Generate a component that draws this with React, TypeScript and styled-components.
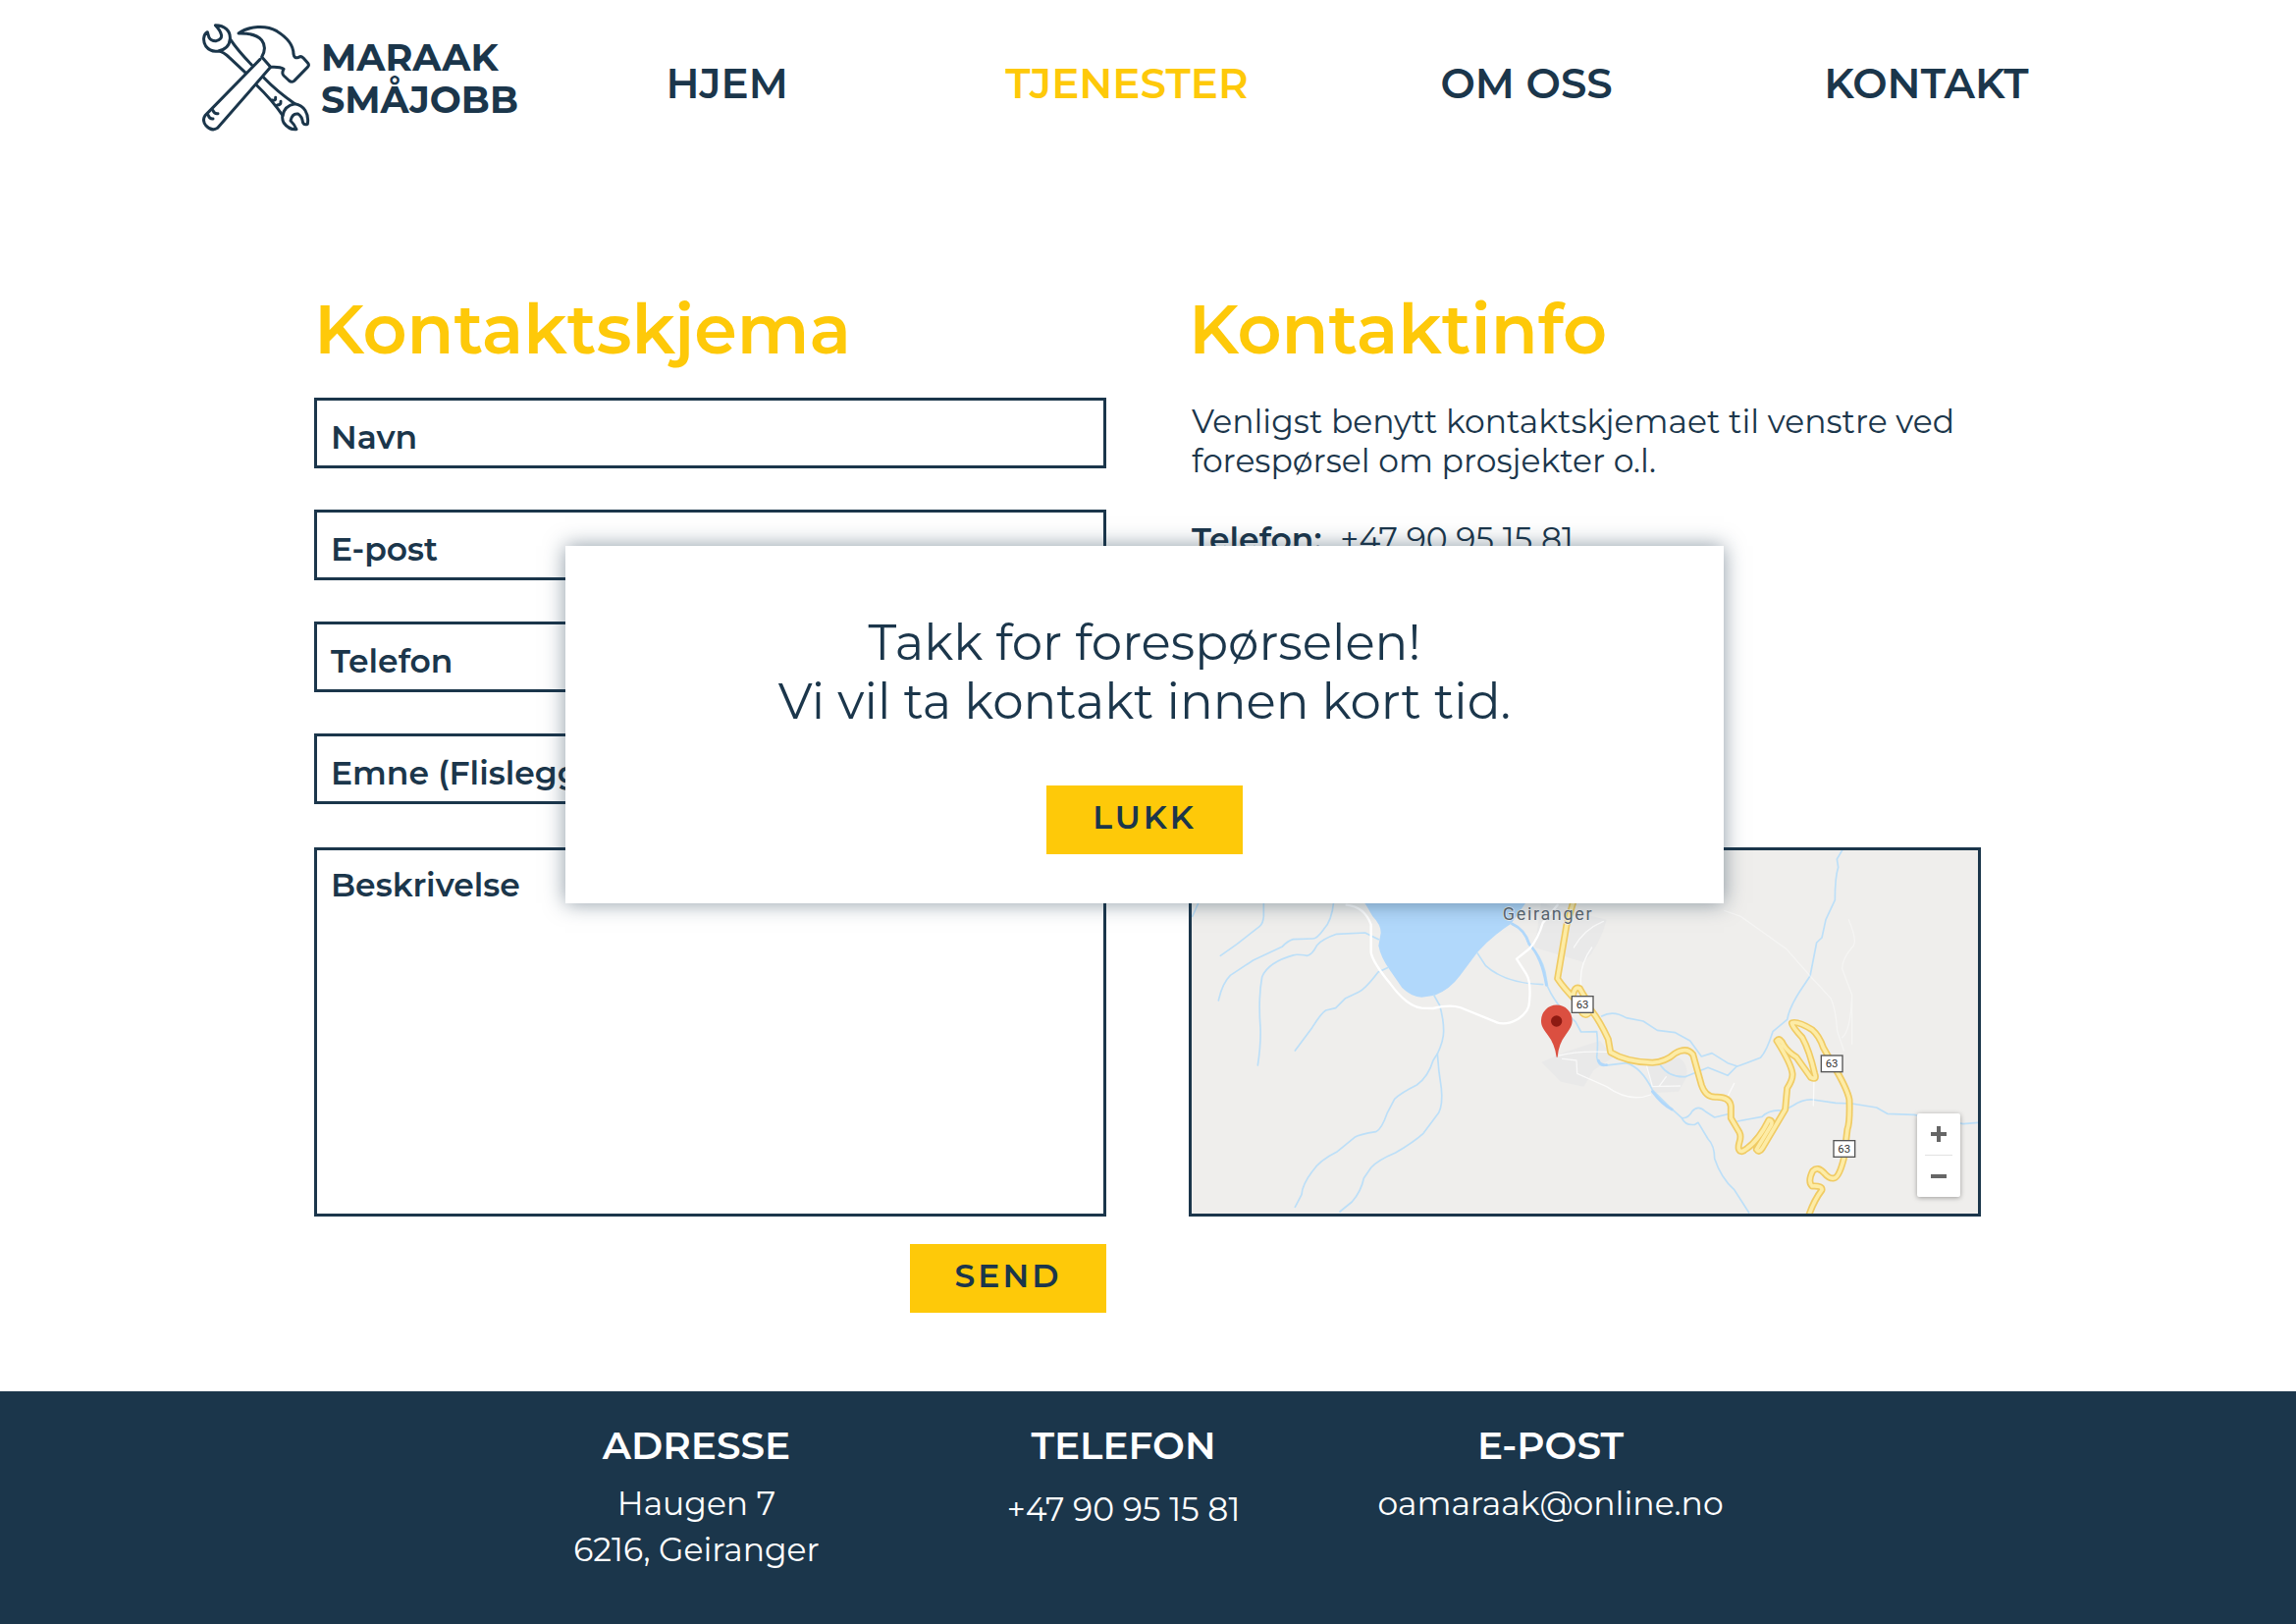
import React, { useState } from "react";
import styled, { createGlobalStyle } from "styled-components";

const navy = "#1b364b";
const yellow = "#fec909";
const fontStack = `Montserrat, Inter, "Noto Sans", sans-serif`;

const GlobalStyle = createGlobalStyle`
  *, *::before, *::after { box-sizing: border-box; }
  body {
    margin: 0;
    background: #fff;
    color: ${navy};
    font-family: ${fontStack};
  }
`;

const Page = styled.div`
  position: relative;
  display: flex;
  flex-direction: column;
  min-height: 100vh;
`;

const Header = styled.header`
  display: grid;
  grid-template-columns: 331px 1fr;
  align-items: center;
  padding: 24px 173px 24px 206px;
`;

const Logo = styled.a`
  display: flex;
  align-items: center;
  gap: 11px;
  color: ${navy};
  font-size: 38px;
  line-height: 43px;
  font-weight: 700;
  text-decoration: none;

  svg {
    flex: none;
    width: 110px;
    height: 110px;
  }

  span {
    padding-top: 2px;
  }
`;

const Nav = styled.nav`
  display: grid;
  grid-template-columns: repeat(4, 1fr);
  padding-top: 12px;
`;

const NavLink = styled.a<{ $active?: boolean }>`
  color: ${(p) => (p.$active ? yellow : navy)};
  font-size: 42px;
  line-height: 50px;
  font-weight: 600;
  text-align: center;
  text-decoration: none;
`;

const Main = styled.main`
  display: grid;
  grid-template-columns: 1fr 1fr;
  gap: 84px;
  padding: 132px 321px 80px 320px;
`;

const Column = styled.section`
  display: flex;
  flex-direction: column;
  min-width: 0;
`;

const Heading = styled.h2`
  margin: 0 0 25px;
  color: ${yellow};
  font-size: 70px;
  line-height: 90px;
  font-weight: 600;
`;

const Form = styled.form`
  display: flex;
  flex-direction: column;
`;

const Fields = styled.div`
  display: flex;
  flex-direction: column;
  gap: 42px;
  margin-bottom: 44px;
`;

const Field = styled.label<{ $tall?: boolean }>`
  display: flex;
  align-items: ${(p) => (p.$tall ? "flex-start" : "center")};
  gap: 16px;
  height: ${(p) => (p.$tall ? "376px" : "72px")};
  padding: ${(p) => (p.$tall ? "15px 14px" : "8px 14px 0")};
  border: 3px solid ${navy};
  font-size: 33px;
  line-height: 40px;
  font-weight: 600;
  white-space: nowrap;
`;

const Input = styled.input`
  flex: 1;
  min-width: 0;
  padding: 0;
  border: 0;
  outline: 0;
  background: transparent;
  color: inherit;
  font: inherit;
  font-weight: 400;
`;

const TextArea = styled(Input).attrs({ as: "textarea" })`
  align-self: stretch;
  resize: none;
`;

const Button = styled.button`
  width: 200px;
  height: 70px;
  padding: 0 0 7px;
  border: 0;
  background: ${yellow};
  color: ${navy};
  font-family: inherit;
  font-size: 33px;
  line-height: 40px;
  font-weight: 600;
  letter-spacing: 3px;
  cursor: pointer;
`;

const SendButton = styled(Button)`
  align-self: flex-end;
  margin-top: 28px;
`;

const Info = styled.div`
  flex: 1;
  padding: 4px 0 0 3px;
  font-size: 33px;
  line-height: 40px;

  p {
    margin: 0 0 40px;
  }

  b {
    margin-right: 10px;
    font-weight: 600;
  }
`;

const MapFrame = styled.div`
  position: relative;
  height: 376px;
  margin-bottom: 98px;
  border: 3px solid ${navy};
  background: #efeeec;

  > svg {
    display: block;
    width: 100%;
    height: 100%;
  }
`;

const ZoomControl = styled.div`
  position: absolute;
  right: 18px;
  bottom: 17px;
  display: flex;
  flex-direction: column;
  align-items: center;
  width: 44px;
  background: #fff;
  border-radius: 2px;
  box-shadow: 0 1px 5px rgba(0, 0, 0, 0.35);
`;

const ZoomButton = styled.button`
  display: flex;
  align-items: center;
  justify-content: center;
  width: 44px;
  height: 42px;
  padding: 0;
  border: 0;
  background: transparent;
  cursor: pointer;
`;

const ZoomDivider = styled.div`
  width: 28px;
  height: 1px;
  background: #e2e2e2;
`;

const Footer = styled.footer`
  flex: 1;
  display: grid;
  grid-template-columns: repeat(3, 1fr);
  padding: 31px 542px 54px 492px;
  background: ${navy};
  color: #fff;
  text-align: center;
`;

const FooterColumn = styled.div<{ $gap?: number }>`
  display: flex;
  flex-direction: column;
  gap: ${(p) => p.$gap ?? 12}px;
  font-size: 33px;
  line-height: 47px;

  h3 {
    margin: 0;
    font-size: 39px;
    line-height: 48px;
    font-weight: 600;
  }

  address,
  a {
    color: inherit;
    font-style: normal;
    text-decoration: none;
  }
`;

const Overlay = styled.div`
  position: absolute;
  inset: 0;
  display: flex;
  align-items: flex-start;
  justify-content: center;
  padding: 556px 7px 0 0;
`;

const Dialog = styled.div`
  display: flex;
  flex-direction: column;
  align-items: center;
  gap: 55px;
  width: 1180px;
  padding: 69px 40px 50px;
  background: #fff;
  box-shadow: 0 0 20px rgba(27, 54, 75, 0.5);
  font-size: 50px;
  line-height: 60px;
  text-align: center;

  p {
    margin: 0;
  }
`;

const ToolsIcon = () => (
  <svg
    viewBox="47 41 330 330"
    fill="none"
    stroke={navy}
    strokeWidth="9"
    strokeLinecap="round"
    strokeLinejoin="round"
    aria-hidden="true"
  >
    <path d="M198 167 Q156 124 132 88 C134 64 116 46 87 46 Q103 62 106 78 Q106 90 90 94 Q74 95 68 84 L63 67 C49 74 49 96 58 110 C68 123 84 127 96 125 Q112 127 130 145 L178 190 M132 88 Q130 118 96 125" />
    <path d="M158 71 C190 47 244 46 275 64 C304 82 326 107 326 134 Q328 148 340 145 Q348 138 356 146 L370 162 Q375 168 369 174 L328 216 Q320 222 312 215 L296 200 Q289 193 296 180 Q284 172 256 174 L229 143 C240 124 241 108 229 92 C215 75 190 70 158 71 Z" />
    <path d="M224 150 L56 322 Q46 337 58 352 Q76 372 94 360 L256 174" />
    <path d="M80 307 Q85 318 95 316 M66 322 Q70 333 80 332" />
    <path d="M235 206 Q275 248 330 286 C358 290 374 316 369 348 Q359 352 355 344 Q352 324 340 317 Q322 314 317 338 Q330 350 335 364 Q312 366 296 344 Q290 330 293 322 Q260 274 214 230" />
    <path d="M330 286 Q298 292 293 322 M261 275 Q272 278 271 267 M276 290 Q288 290 287 279" />
  </svg>
);

const roadPath =
  "M1210 200 L1188 275 L1160 440 Q1180 470 1215 505 M1208 490 Q1212 462 1228 470 Q1236 485 1246 500 M1236 545 Q1250 560 1262 535 Q1290 570 1315 625 L1322 665 Q1370 695 1450 697 Q1490 695 1520 668 Q1555 648 1574 672 L1600 765 Q1612 802 1642 802 Q1686 800 1690 830 L1690 866 L1716 910 Q1722 922 1716 940 Q1708 968 1724 968 Q1770 945 1806 872 Q1820 874 1812 890 L1768 962 Q1776 974 1786 958 L1856 840 L1862 775 Q1880 748 1878 730 Q1874 700 1830 630 Q1840 618 1852 645 Q1865 665 1890 680 L1934 742 Q1954 752 1946 730 Q1930 660 1908 620 Q1878 588 1876 576 Q1892 568 1938 596 Q1960 615 1972 650 L2000 700 Q2046 776 2052 810 Q2054 880 2046 900 L2035 990 Q2020 1050 2004 1050 Q1990 1052 1975 1034 Q1955 1012 1940 1028 Q1924 1060 1938 1074 Q1970 1072 1968 1086 Q1942 1120 1926 1170";

const shields = [
  { x: 1236, y: 519 },
  { x: 1998, y: 700 },
  { x: 2036, y: 960 },
];

const AreaMap = () => (
  <svg
    viewBox="42 48 2403 1110"
    preserveAspectRatio="xMidYMid slice"
    fill="none"
    strokeLinecap="round"
    strokeLinejoin="round"
    role="img"
    aria-label="Geiranger"
  >
    <g fill="#e9e9e9">
      <path d="M1110 210 L1310 260 Q1290 340 1240 390 L1090 345 Z" />
      <path d="M1112 695 L1180 665 L1290 630 L1330 680 L1270 720 L1240 770 L1170 755 Z" />
      <path d="M1430 705 L1530 680 Q1560 700 1555 740 L1530 785 L1450 790 Z" />
    </g>
    <path
      d="M540 170 L575 215 L595 250 Q620 275 620 300 L613 340 Q620 375 645 410 L685 468 Q715 497 745 497 L785 491 Q830 475 863 430 L915 360 Q960 310 1018 272 L1090 170 Z"
      fill="#b1d8fb"
    />
    <g stroke="#bcdff8" strokeWidth="5">
      <path d="M62 210 L44 250 M262 205 L262 250 Q260 272 250 280 L180 335 L130 370" />
      <path d="M476 205 Q470 265 445 290 Q425 318 412 318 L352 320 Q335 325 318 343 L230 384 L160 430 Q135 455 124 507" />
      <path d="M613 320 L572 300 L485 304 Q440 320 425 338 Q410 368 395 370 Q360 365 355 368 Q275 390 257 435 Q245 500 252 590 Q254 640 244 705" />
      <path d="M640 407 L612 420 Q570 475 550 482 L512 500 L482 530 L452 537 Q438 545 410 590 L358 660" />
      <path d="M782 490 L800 522 Q812 565 812 600 Q812 630 793 670 Q785 682 780 690 Q765 740 730 765 Q680 790 662 808 L640 850 Q622 902 605 908 Q555 916 540 925 L485 970 Q432 996 410 1030 Q380 1070 378 1100 L358 1138" />
      <path d="M793 670 Q796 720 805 775 Q810 825 797 850 L750 913 Q720 940 665 972 Q608 996 590 1018 L568 1050 Q560 1090 532 1122 L495 1152" />
      <path d="M915 362 L940 400 Q1000 455 1115 458 M1018 272 Q1060 290 1072 335 Q1110 370 1122 420 L1130 465 Q1145 500 1175 535 L1215 572 L1232 603 L1280 602 Q1285 640 1280 680 Q1284 705 1300 706 L1370 698 Q1415 710 1450 780 L1500 830 L1540 866 Q1550 890 1580 886 L1590 880 L1620 930 Q1640 950 1640 990 Q1660 1050 1700 1085 L1745 1155" />
      <path d="M1295 555 Q1330 535 1370 560 L1422 570 L1465 598 L1520 605 L1565 630 L1600 678 L1632 668 L1680 698 L1710 708 L1780 682 Q1800 660 1818 602 L1862 565 Q1868 530 1900 480 L1932 432 L1952 330 L1968 315 L1980 260 L2008 200 Q2008 130 2018 100 L2014 75 L2030 48" />
      <path d="M1475 705 Q1500 742 1550 740 L1620 712 L1680 736 L1708 708 M1540 866 Q1560 868 1572 845 Q1590 825 1612 846 L1640 864 L1690 852 M1710 876 L1785 862 Q1810 838 1850 844 L1880 828 Q1910 808 1940 810 L2010 820 L2060 822 L2135 834 L2168 853 L2250 856 L2400 884 L2445 880" />
    </g>
    <path
      d="M1022 273 Q1060 290 1074 335 Q1112 375 1126 460 M1450 785 Q1480 825 1510 840 M1285 690 Q1290 706 1310 704"
      stroke="#b1d8fb"
      strokeWidth="8"
    />
    <g stroke="#fff">
      <path
        d="M515 215 Q570 220 590 275 L590 360 Q595 390 650 457 Q700 525 745 530 L780 531 Q830 518 862 528 L970 572 Q1000 586 1040 563 Q1075 540 1074 510 Q1080 450 1064 425 L1035 380 L1075 348 Q1100 320 1115 270 L1160 215"
        strokeWidth="7"
      />
      <path
        d="M1165 675 Q1220 660 1310 664 M1175 685 L1218 690 L1220 730 L1310 770 Q1380 820 1445 795 M1432 705 L1450 770 L1535 768 M1470 770 L1492 740 M1210 345 Q1240 290 1300 265 M1232 460 Q1225 400 1265 345 M1680 800 L1700 760 M1944 745 L1942 828"
        strokeWidth="4"
        opacity="0.7"
      />
      <path
        d="M1670 232 L1720 250 L1790 300 L1860 350 L1932 432 L1995 500 Q2010 530 2015 600 L2035 660 M2050 260 Q2080 330 2060 345 Q2030 380 2030 410 L2060 490 Q2056 600 2030 620 M2060 490 L2060 640"
        strokeWidth="4"
        opacity="0.4"
      />
    </g>
    <path d={roadPath} stroke="#f0cb64" strokeWidth="21" />
    <path d={roadPath} stroke="#fdeca6" strokeWidth="11" />
    <text
      x="1131"
      y="262"
      fill="#5d6871"
      fontFamily="Roboto, sans-serif"
      fontSize="54"
      letterSpacing="5"
      textAnchor="middle"
      stroke="#f4f4f4"
      strokeWidth="4"
      paintOrder="stroke"
    >
      Geiranger
    </text>
    {shields.map((s) => (
      <g key={s.y}>
        <rect x={s.x - 32} y={s.y - 25} width="65" height="50" fill="#fff" stroke="#555" strokeWidth="4" strokeLinejoin="miter" />
        <text x={s.x} y={s.y + 12} fill="#333" fontFamily="Roboto, sans-serif" fontSize="34" textAnchor="middle">
          63
        </text>
      </g>
    ))}
    <path
      d="M1157 680 Q1152 640 1130 612 C1112 590 1110 580 1110 568 A47 47 0 0 1 1205 568 C1205 580 1202 590 1185 612 Q1163 640 1160 680 Z"
      fill="#db4f40"
    />
    <circle cx="1157" cy="570" r="17" fill="#8e1a12" />
  </svg>
);

const fieldLabels = ["Navn", "E-post", "Telefon", "Emne (Flislegging)"];

const navItems = ["HJEM", "TJENESTER", "OM OSS", "KONTAKT"];

export default function App() {
  const [open, setOpen] = useState(true);

  return (
    <>
      <GlobalStyle />
      <Page>
        <Header>
          <Logo href="#">
            <ToolsIcon />
            <span>
              MARAAK
              <br />
              SMÅJOBB
            </span>
          </Logo>
          <Nav>
            {navItems.map((item) => (
              <NavLink key={item} href="#" $active={item === "TJENESTER"}>
                {item}
              </NavLink>
            ))}
          </Nav>
        </Header>

        <Main>
          <Column>
            <Heading>Kontaktskjema</Heading>
            <Form
              onSubmit={(e) => {
                e.preventDefault();
                setOpen(true);
              }}
            >
              <Fields>
                {fieldLabels.map((label) => (
                  <Field key={label}>
                    <span>{label}</span>
                    <Input type="text" />
                  </Field>
                ))}
              </Fields>
              <Field $tall>
                <span>Beskrivelse</span>
                <TextArea />
              </Field>
              <SendButton type="submit">SEND</SendButton>
            </Form>
          </Column>

          <Column>
            <Heading>Kontaktinfo</Heading>
            <Info>
              <p>
                Venligst benytt kontaktskjemaet til venstre ved
                <br />
                forespørsel om prosjekter o.l.
              </p>
              <p>
                <b>Telefon:</b> +47 90 95 15 81
              </p>
            </Info>
            <MapFrame>
              <AreaMap />
              <ZoomControl>
                <ZoomButton type="button" aria-label="Zoom inn">
                  <svg width="16" height="16" viewBox="0 0 16 16" fill="#666">
                    <path d="M6 0h4v6h6v4h-6v6H6v-6H0V6h6z" />
                  </svg>
                </ZoomButton>
                <ZoomDivider />
                <ZoomButton type="button" aria-label="Zoom ut">
                  <svg width="16" height="16" viewBox="0 0 16 16" fill="#666">
                    <path d="M0 6h16v4H0z" />
                  </svg>
                </ZoomButton>
              </ZoomControl>
            </MapFrame>
          </Column>
        </Main>

        <Footer>
          <FooterColumn>
            <h3>ADRESSE</h3>
            <address>
              Haugen 7<br />
              6216, Geiranger
            </address>
          </FooterColumn>
          <FooterColumn $gap={18}>
            <h3>TELEFON</h3>
            <a href="tel:+4790951581">+47 90 95 15 81</a>
          </FooterColumn>
          <FooterColumn>
            <h3>E-POST</h3>
            <a href="mailto:oamaraak@online.no">oamaraak@online.no</a>
          </FooterColumn>
        </Footer>

        {open && (
          <Overlay>
            <Dialog role="dialog" aria-labelledby="takk">
              <p id="takk">
                Takk for forespørselen!
                <br />
                Vi vil ta kontakt innen kort tid.
              </p>
              <Button type="button" onClick={() => setOpen(false)}>
                LUKK
              </Button>
            </Dialog>
          </Overlay>
        )}
      </Page>
    </>
  );
}
